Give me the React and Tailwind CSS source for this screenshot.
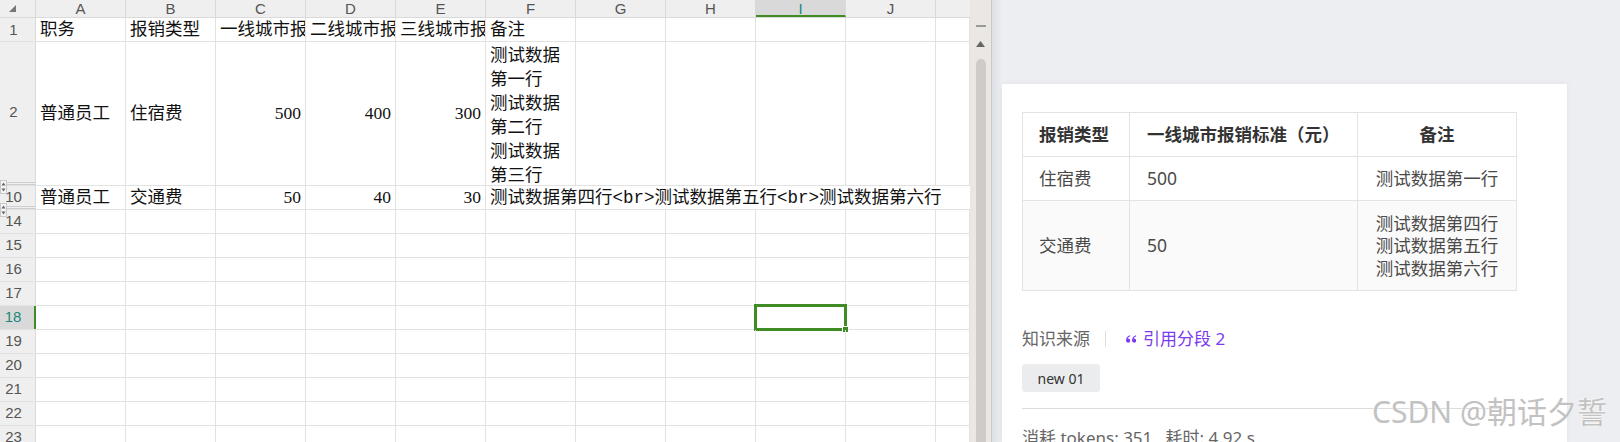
import React from 'react';

const cols = ['A', 'B', 'C', 'D', 'E', 'F', 'G', 'H', 'I', 'J'];
const emptyRows = [14, 15, 16, 17, 18, 19, 20, 21, 22, 23];

const cellFont = { fontFamily: '"Liberation Serif", "Noto Sans CJK SC", serif' };
const monoFont = { fontFamily: '"Liberation Mono", monospace' };
const uiFont = { fontFamily: '"Liberation Sans", "Noto Sans CJK SC", sans-serif' };
const cardFont = { fontFamily: '"Noto Sans", "Noto Sans CJK SC", sans-serif' };

const RowHead = ({ n, active, hidden }) => (
  <div
    className={`w-[36px] shrink-0 flex items-center justify-center pr-[8px] text-[15px] border-r ${
      hidden ? 'border-b-[3px] border-double border-b-[#cfcfcf]' : ''
    } ${active ? 'bg-[#d9d9d9] text-[#1b8a7a] border-r-2 border-r-[#3f8c24]' : 'bg-[#efefef] text-[#555] border-r-[#dadada]'}`}
    style={uiFont}
  >
    {n}
  </div>
);

const Cell = ({ children, className = '', w = 'w-[90px]' }) => (
  <div className={`${w} shrink-0 border-r border-[#e2e2e2] px-[4px] overflow-hidden whitespace-nowrap ${className}`}>
    {children}
  </div>
);

const Quote = () => (
  <svg width="12" height="10" viewBox="0 0 12 10" fill="#7c3aed">
    <path d="M5 1.2C2.6 1.8 1 3.8 1 6.6a2.1 2.1 0 1 0 2.2-2.1c-.3 0-.5 0-.7.1.4-1.1 1.3-1.9 2.8-2.4z" />
    <path d="M11 1.2C8.6 1.8 7 3.8 7 6.6a2.1 2.1 0 1 0 2.2-2.1c-.3 0-.5 0-.7.1.4-1.1 1.3-1.9 2.8-2.4z" />
  </svg>
);

const GroupMark = () => (
  <svg width="7" height="14" viewBox="0 0 7 14">
    <rect x="0.5" y="0.5" width="6" height="13" fill="#f4f4f4" stroke="#c9c9c9" />
    <path d="M1.5 5.5L3.5 2.5L5.5 5.5Z" fill="#666" />
    <path d="M1.5 8.5L3.5 11.5L5.5 8.5Z" fill="#666" />
  </svg>
);

export default function App() {
  return (
    <div className="relative w-[1620px] h-[442px] overflow-hidden flex bg-white">
      {/* Spreadsheet */}
      <div className="relative w-[970px] shrink-0 h-full overflow-hidden">
        {/* column header */}
        <div className="flex h-[18px] bg-[#efefef] border-b border-[#dadada] text-[15px] text-[#555] leading-[17px]" style={uiFont}>
          <div className="w-[36px] shrink-0 border-r border-[#dadada] flex items-center pl-[9px]">
            <svg width="7" height="7" viewBox="0 0 7 7"><path d="M7 0V7H0Z" fill="#777" /></svg>
          </div>
          {cols.map(c => (
            <div
              key={c}
              className={`w-[90px] shrink-0 text-center border-r border-[#dadada] ${
                c === 'I' ? 'bg-[#d9d9d9] text-[#1b8a7a] border-b-2 border-b-[#3f8c24]' : ''
              }`}
            >
              {c}
            </div>
          ))}
          <div className="w-[34px] shrink-0" />
        </div>

        <div className="text-[17.5px] text-[#111]" style={cellFont}>
          {/* row 1 */}
          <div className="flex h-[24px] border-b border-[#e2e2e2] leading-[23px]">
            <RowHead n={1} />
            <Cell>职务</Cell>
            <Cell>报销类型</Cell>
            <Cell>一线城市报销标准（元）</Cell>
            <Cell>二线城市报销标准（元）</Cell>
            <Cell>三线城市报销标准（元）</Cell>
            <Cell>备注</Cell>
            <Cell /><Cell /><Cell /><Cell />
            <Cell w="w-[34px]" />
          </div>

          {/* row 2 */}
          <div className="flex h-[144px] border-b border-[#e2e2e2]">
            <RowHead n={2} hidden />
            <Cell className="flex items-center">普通员工</Cell>
            <Cell className="flex items-center">住宿费</Cell>
            <Cell className="flex items-center justify-end">500</Cell>
            <Cell className="flex items-center justify-end">400</Cell>
            <Cell className="flex items-center justify-end">300</Cell>
            <Cell className="leading-[24px] pt-[1px]">
              <div>测试数据</div>
              <div>第一行</div>
              <div>测试数据</div>
              <div>第二行</div>
              <div>测试数据</div>
              <div>第三行</div>
            </Cell>
            <Cell /><Cell /><Cell /><Cell />
            <Cell w="w-[34px]" />
          </div>

          {/* row 10 */}
          <div className="flex h-[24px] border-b border-[#e2e2e2] leading-[23px]">
            <RowHead n={10} hidden />
            <Cell>普通员工</Cell>
            <Cell>交通费</Cell>
            <Cell className="text-right">50</Cell>
            <Cell className="text-right">40</Cell>
            <Cell className="text-right">30</Cell>
            <div className="w-[484px] shrink-0 px-[4px] whitespace-nowrap overflow-hidden">
              测试数据第四行<span style={monoFont}>&lt;br&gt;</span>测试数据第五行<span style={monoFont}>&lt;br&gt;</span>测试数据第六行
            </div>
          </div>

          {emptyRows.map(n => (
            <div key={n} className="flex h-[24px] border-b border-[#e2e2e2]">
              <RowHead n={n} active={n === 18} />
              {cols.map(c => (
                <Cell key={c} className="relative overflow-visible">
                  {n === 18 && c === 'I' && (
                    <div className="absolute left-[-2px] top-[-2px] w-[93px] h-[27px] border-[3px] border-[#3f8c24]">
                      <div className="absolute right-[-5px] bottom-[-5px] w-[7px] h-[7px] bg-[#3f8c24] border border-white" />
                    </div>
                  )}
                </Cell>
              ))}
              <Cell w="w-[34px]" />
            </div>
          ))}
        </div>

        {/* hidden row group markers */}
        <div className="absolute left-0 top-[180px]"><GroupMark /></div>
        <div className="absolute left-0 top-[203px]"><GroupMark /></div>
      </div>

      {/* scrollbar */}
      <div className="w-[21px] shrink-0 h-full bg-[#ebe7e2] flex flex-col items-center">
        <div className="mt-[25px] w-[10px] h-[2px] bg-[#9a9a9a]" />
        <svg className="mt-[14px]" width="9" height="6" viewBox="0 0 9 6"><path d="M0 6L4.5 0L9 6Z" fill="#666" /></svg>
        <div className="mt-[12px] w-[10px] flex-1 rounded-t-full bg-[#cfcbc6]" />
      </div>
      <div className="w-px shrink-0 h-full bg-[#c6c9ce]" />

      {/* right panel */}
      <div className="flex-1 h-full bg-[#eceef1] flex">
        <div className="w-[10px] h-full bg-gradient-to-r from-[#dde0e4] to-[#eceef1]" />
        <div className="w-[565px] mt-[84px] bg-white shadow-[0_0_6px_rgba(0,0,0,0.05)] pl-[20px] pt-[28px]" style={cardFont}>
          <table className="w-[494px] border-collapse text-[17.5px] table-fixed">
            <thead>
              <tr className="h-[44px] text-[#333]">
                <th className="w-[107px] border border-[#e3e3e3] px-[16px] text-left font-bold whitespace-nowrap">报销类型</th>
                <th className="w-[228px] border border-[#e3e3e3] px-[17px] text-left font-bold whitespace-nowrap">一线城市报销标准（元）</th>
                <th className="w-[159px] border border-[#e3e3e3] px-[10px] text-center font-bold">备注</th>
              </tr>
            </thead>
            <tbody className="text-[#4a4a4a]">
              <tr className="h-[44px]">
                <td className="border border-[#e3e3e3] px-[16px]">住宿费</td>
                <td className="border border-[#e3e3e3] px-[17px]">500</td>
                <td className="border border-[#e3e3e3] px-[10px] text-center">测试数据第一行</td>
              </tr>
              <tr className="h-[90px] bg-[#fafafa]">
                <td className="border border-[#e3e3e3] px-[16px]">交通费</td>
                <td className="border border-[#e3e3e3] px-[17px]">50</td>
                <td className="border border-[#e3e3e3] px-[10px] text-center leading-[22.5px]">
                  测试数据第四行<br />测试数据第五行<br />测试数据第六行
                </td>
              </tr>
            </tbody>
          </table>

          <div className="mt-[36px] h-[24px] flex items-center text-[17px]">
            <span className="text-[#666]">知识来源</span>
            <span className="ml-[15px] mr-[19px] w-px h-[16px] bg-[#dedede]" />
            <Quote />
            <span className="ml-[6px] text-[#7c3aed]">引用分段 2</span>
          </div>

          <div className="mt-[13px] w-[78px] h-[28px] rounded-[3px] bg-[#ebeced] flex items-center justify-center text-[14px] text-[#333]">
            new 01
          </div>

          <div className="mt-[16px] w-[494px] border-t border-[#dcdcdc]" />

          <div className="mt-[17px] text-[17px] text-[#666] leading-[24px] whitespace-pre">
            消耗 tokens: 351   耗时: 4.92 s
          </div>
        </div>
      </div>

      {/* watermark */}
      <div
        className="absolute left-[1372px] top-[396px] text-[30px] leading-[32px] text-[#c2c2c2] whitespace-nowrap [text-shadow:0_0_2px_#fff,0_0_1px_#fff]"
        style={cardFont}
      >
        CSDN @朝话夕誓
      </div>
    </div>
  );
}
